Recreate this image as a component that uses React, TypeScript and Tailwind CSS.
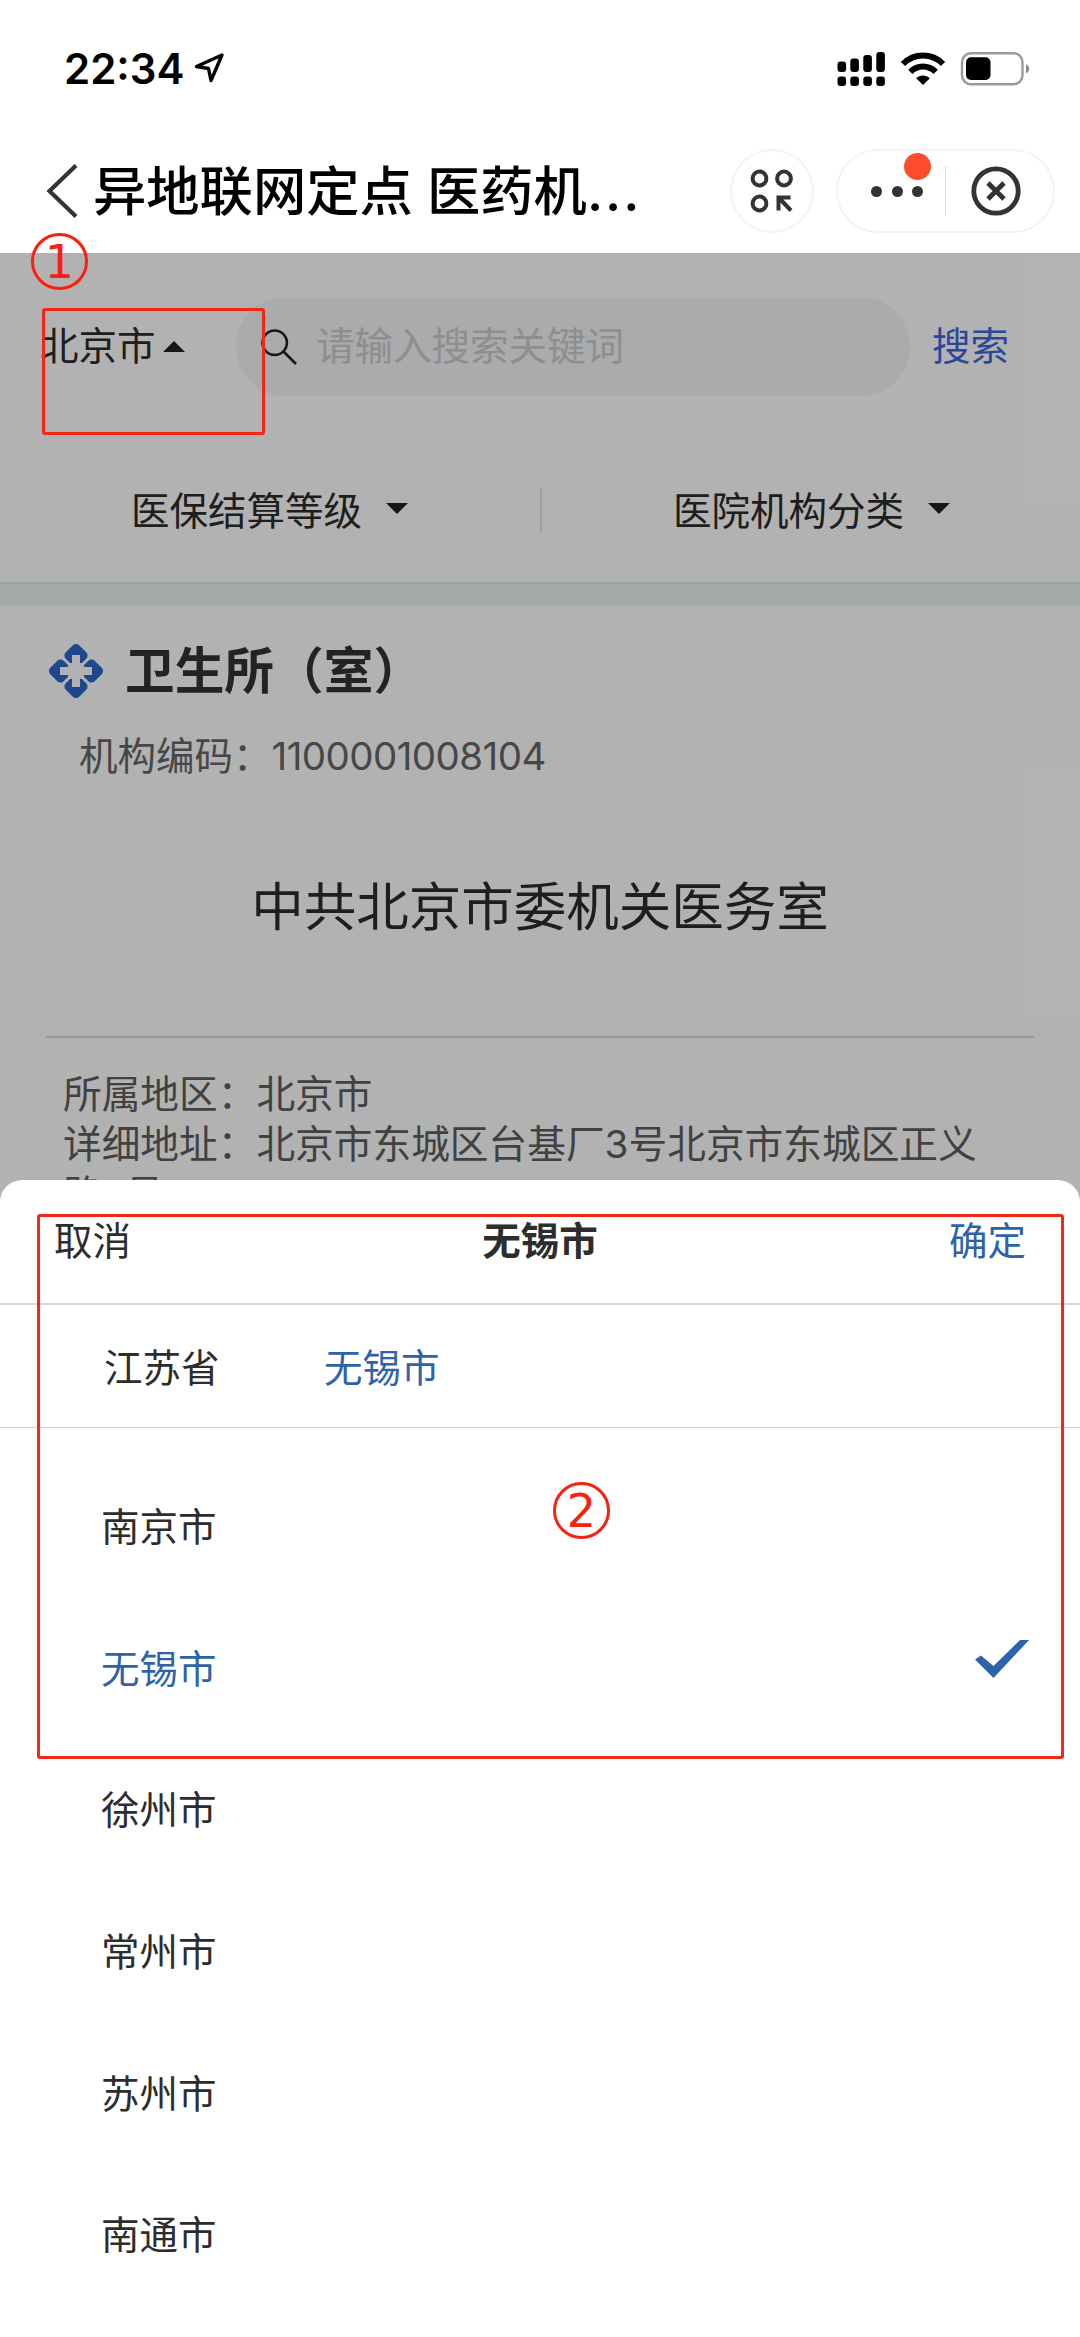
import type { ReactNode } from "react";

const CITIES = ["南京市", "无锡市", "徐州市", "常州市", "苏州市", "南通市"];
const SELECTED_CITY = "无锡市";

function StatusBar() {
  return (
    <div className="flex h-[138px] items-start justify-between pl-[64px] pr-[50px] pt-[42px]">
      <div className="flex h-[54px] items-center">
        <span className="w-[129px] whitespace-nowrap text-[42px] font-semibold leading-[54px] text-black">22:34</span>
        <svg width="32" height="32" viewBox="0 0 32 32" fill="none" className="-mt-[2px]">
          <path d="M29 3L3.5 14.5L15.5 16.5L18 28.5L29 3Z" stroke="#000" strokeWidth="3.4" strokeLinejoin="round" />
        </svg>
      </div>
      <div className="flex h-[54px] items-center">
        <svg width="48" height="36" viewBox="0 0 48 36" className="mr-[15px]">
          <rect x="0.5" y="10.5" width="8.6" height="10.5" rx="3" />
          <rect x="13.3" y="7.5" width="8.6" height="13.5" rx="3" />
          <rect x="26.3" y="4" width="8.6" height="17" rx="3" />
          <rect x="39.3" y="1" width="8.6" height="20" rx="3" />
          <rect x="0.5" y="25.5" width="8.6" height="9.5" rx="3" />
          <rect x="13.3" y="25.5" width="8.6" height="9.5" rx="3" />
          <rect x="26.3" y="25.5" width="8.6" height="9.5" rx="3" />
          <rect x="39.3" y="25.5" width="8.6" height="9.5" rx="3" />
        </svg>
        <svg width="46" height="36" viewBox="0 0 46 36" fill="none" className="mr-[14px]">
          <path d="M3 13C14 1.8 32 1.8 43 13" stroke="#000" strokeWidth="6" />
          <path d="M10.3 20.8C17.5 13.6 28.5 13.6 35.7 20.8" stroke="#000" strokeWidth="6" />
          <path d="M23 34L16.2 27.2C20 23.6 26 23.6 29.8 27.2Z" fill="#000" />
        </svg>
        <svg width="70" height="36" viewBox="0 0 70 36" fill="none">
          <rect x="2" y="2.2" width="60.5" height="31" rx="9" stroke="#9b9b9b" strokeWidth="2.4" />
          <rect x="6" y="6.2" width="24.5" height="22.8" rx="5" fill="#000" />
          <path d="M66 13.2C70.2 15 70.2 20.4 66 22.4Z" fill="#8b8b8b" />
        </svg>
      </div>
    </div>
  );
}

function NavBar() {
  return (
    <div className="flex h-[115px] items-start pl-[46px] pr-[25px]">
      <svg width="34" height="54" viewBox="0 0 34 54" fill="none" className="mt-[26px] shrink-0">
        <path d="M30 1.5L3.5 27L30 52.5" stroke="#333" strokeWidth="4.2" />
      </svg>
      <h1 className="ml-[13px] mt-[18px] w-[638px] whitespace-nowrap text-[53.3px] font-medium leading-[72px] text-black">
        异地联网定点 医药机<span className="tracking-[2px]">...</span>
      </h1>
      <div className="mt-[11px] flex h-[84px] w-[84px] shrink-0 items-center justify-center rounded-full border-2 border-[#f4f4f4]">
        <svg width="44" height="44" viewBox="0 0 44 44" fill="none" stroke="#333" strokeWidth="4">
          <circle cx="9.5" cy="9.5" r="6.9" />
          <circle cx="34" cy="9.5" r="6.9" />
          <circle cx="9.5" cy="34.5" r="6.9" />
          <path d="M28.5 41.5V28.5H40.5M29 29L41 41.5" />
        </svg>
      </div>
      <div className="ml-[22px] mt-[11px] flex h-[84px] w-[219px] shrink-0 items-center rounded-full border-2 border-[#f4f4f4]">
        <div className="relative ml-[33px] flex w-[52px] justify-between">
          <i className="h-[11px] w-[11px] rounded-full bg-[#333]" />
          <i className="h-[11px] w-[11px] rounded-full bg-[#333]" />
          <i className="h-[11px] w-[11px] rounded-full bg-[#333]" />
          <i className="absolute -top-[33px] left-[33px] h-[27px] w-[27px] rounded-full bg-[#fd4c2d]" />
        </div>
        <div className="ml-[22px] h-[50px] w-px bg-[#d9d9d9]" />
        <svg width="50" height="50" viewBox="0 0 50 50" fill="none" stroke="#333" strokeWidth="4.8" className="ml-[25px]">
          <circle cx="25" cy="25" r="22.2" />
          <path d="M17 17L33 33M33 17L17 33" />
        </svg>
      </div>
    </div>
  );
}

function Caret({ up = false }: { up?: boolean }) {
  return (
    <svg width="22" height="11" viewBox="0 0 22 11" fill="#222">
      <path d={up ? "M0 11L11 0L22 11Z" : "M0 0H22L11 11Z"} />
    </svg>
  );
}

function SearchRow() {
  return (
    <div className="flex h-[99px] items-center pl-[40px] text-[38.5px] leading-[56px]">
      <span className="-mt-[2px] w-[123px] whitespace-nowrap text-[#2c2c2c]">北京市</span>
      <Caret up />
      <div className="ml-[51px] flex h-[99px] w-[674px] items-center rounded-full bg-[#f3f5f7] pl-[25px]">
        <svg width="36" height="36" viewBox="0 0 36 36" fill="none" stroke="#222" strokeWidth="2.6">
          <circle cx="13.7" cy="13.7" r="12.2" />
          <path d="M22.5 22.5L35 35" />
        </svg>
        <span className="-mt-[2px] ml-[19px] text-[#cbcccf]">请输入搜索关键词</span>
      </div>
      <span className="-mt-[2px] ml-[22px] text-[#3e66df]">搜索</span>
    </div>
  );
}

function HospitalIcon() {
  return (
    <svg width="56" height="56" viewBox="0 0 56 56">
      <g fill="#2b67c8">
        <rect x="18.5" y="3" width="19" height="19" rx="4.5" transform="rotate(45 28 12.5)" />
        <rect x="18.5" y="34" width="19" height="19" rx="4.5" transform="rotate(45 28 43.5)" />
        <rect x="3" y="18.5" width="19" height="19" rx="4.5" transform="rotate(45 12.5 28)" />
        <rect x="34" y="18.5" width="19" height="19" rx="4.5" transform="rotate(45 43.5 28)" />
      </g>
      <g fill="#fff">
        <rect x="20" y="20" width="16" height="16" />
        <path d="M24 12H32V24H44V32H32V44H24V32H12V24H24Z" />
      </g>
    </svg>
  );
}

function InstitutionPage() {
  return (
    <div className="relative h-[2084px] overflow-hidden bg-white pt-[44px]">
      <SearchRow />

      <div className="mt-[92px] flex h-[45px] items-center text-[38.5px] leading-[45px] text-[#2c2c2c]">
        <div className="flex w-[540px] items-center pl-[131px]">
          <span className="mt-[2px] w-[255px]">医保结算等级</span>
          <div className="-mt-[5px]"><Caret /></div>
        </div>
        <div className="h-[45px] w-[2px] bg-[#e2e2e2]" />
        <div className="flex items-center pl-[131px]">
          <span className="mt-[2px] w-[255px]">医院机构分类</span>
          <div className="-mt-[5px]"><Caret /></div>
        </div>
      </div>

      <div className="mt-[49px] h-[24px] border-b-[6px] border-t-2 border-b-[#f2f3f4] border-t-[#dfe4e4] bg-[#ebf3f3]" />

      <div className="mt-[30px] flex h-[70px] items-center pl-[48px]">
        <HospitalIcon />
        <h2 className="ml-[21px] text-[49.7px] font-bold leading-[70px] text-[#333]">卫生所（室）</h2>
      </div>
      <p className="mt-[22px] pl-[79px] text-[38.5px] leading-[56px] text-[#666]">
        机构编码：<span className="tracking-[-0.55px]">1100001008104</span>
      </p>
      <p className="mt-[88px] text-center text-[52.5px] leading-[70px] text-[#2c2c2c]">中共北京市委机关医务室</p>
      <div className="mx-[46px] mt-[94px] h-[2px] bg-[#dcdcdc]" />
      <div className="mt-[31px] pl-[63px] text-[38.7px] leading-[50px] text-[#5e5e5e]">
        <p>所属地区：北京市</p>
        <p>详细地址：北京市东城区台基厂3号北京市东城区正义</p>
        <p>路2号</p>
      </div>

      {/* mask */}
      <div className="absolute inset-0 bg-black/30" />
    </div>
  );
}

function CityPicker() {
  return (
    <div className="absolute inset-x-0 bottom-0 h-[1157px] rounded-t-[22px] bg-white text-[38.5px] leading-[56px] text-[#2d2d2d]">
      <div className="flex h-[125px] items-start justify-between border-b-2 border-[#d9d9d9] pl-[54px] pr-[54px] pt-[33px]">
        <span>取消</span>
        <span className="font-bold">无锡市</span>
        <span className="text-[#2e62ab]">确定</span>
      </div>
      <div className="flex h-[123px] items-center border-b border-[#cfcfcf] pl-[104px] pt-[3px]">
        <span className="w-[220px]">江苏省</span>
        <span className="text-[#2e62ab]">无锡市</span>
      </div>
      <ul className="pt-[28px]">
        {CITIES.map((city) =>
          city === SELECTED_CITY ? (
            <li key={city} className="flex h-[141.7px] items-center justify-between pl-[101px] pr-[51px] text-[#2e62ab]">
              {city}
              <svg width="54" height="40" viewBox="0 0 54 40" className="-mt-[20px]">
                <path d="M0 20.5L6 16.5L18.5 27L45 1H54L18.5 39Z" fill="#2e62ab" />
              </svg>
            </li>
          ) : (
            <li key={city} className="flex h-[141.7px] items-center pl-[101px]">
              {city}
            </li>
          )
        )}
      </ul>
    </div>
  );
}

function StepMark({ className, children }: { className: string; children: ReactNode }) {
  return (
    <div
      className={`absolute flex h-[57px] w-[57px] items-center justify-center rounded-full border-[3.5px] border-[#f9200f] font-['DejaVu_Sans',sans-serif] text-[46px] leading-[50px] text-[#f9200f] ${className}`}
    >
      {children}
    </div>
  );
}

export default function App() {
  return (
    <div className="relative h-[2337px] w-[1080px] overflow-hidden bg-white font-['Inter','Noto_Sans_CJK_SC',sans-serif]">
      <StatusBar />
      <NavBar />
      <InstitutionPage />
      <CityPicker />

      {/* step annotations */}
      <div className="absolute left-[42px] top-[308px] h-[127px] w-[223px] rounded-[3px] border-[3px] border-[#f1271b]" />
      <div className="absolute left-[37px] top-[1214px] h-[545px] w-[1027px] rounded-[3px] border-[3px] border-[#f1271b]" />
      <StepMark className="left-[31px] top-[233px]">1</StepMark>
      <StepMark className="left-[553px] top-[1482px]">2</StepMark>
    </div>
  );
}
